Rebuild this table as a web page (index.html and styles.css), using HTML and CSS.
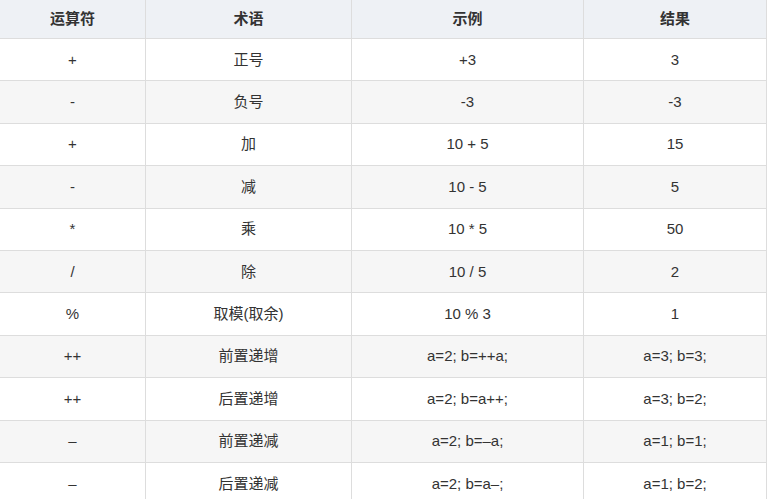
FILE: index.html
```html
<!DOCTYPE html>
<html lang="zh-CN">
<head>
<meta charset="utf-8">
<title>运算符</title>
<link rel="stylesheet" href="styles.css">
</head>
<body>
<table class="ops">
  <colgroup>
    <col class="c1"><col class="c2"><col class="c3"><col class="c4">
  </colgroup>
  <thead>
    <tr><th>运算符</th><th>术语</th><th>示例</th><th>结果</th></tr>
  </thead>
  <tbody>
    <tr><td>+</td><td>正号</td><td>+3</td><td>3</td></tr>
    <tr><td>-</td><td>负号</td><td>-3</td><td>-3</td></tr>
    <tr><td>+</td><td>加</td><td>10 + 5</td><td>15</td></tr>
    <tr><td>-</td><td>减</td><td>10 - 5</td><td>5</td></tr>
    <tr><td>*</td><td>乘</td><td>10 * 5</td><td>50</td></tr>
    <tr><td>/</td><td>除</td><td>10 / 5</td><td>2</td></tr>
    <tr><td>%</td><td>取模(取余)</td><td>10 % 3</td><td>1</td></tr>
    <tr><td>++</td><td>前置递增</td><td>a=2; b=++a;</td><td>a=3; b=3;</td></tr>
    <tr><td>++</td><td>后置递增</td><td>a=2; b=a++;</td><td>a=3; b=2;</td></tr>
    <tr><td>–</td><td>前置递减</td><td>a=2; b=–a;</td><td>a=1; b=1;</td></tr>
    <tr><td>–</td><td>后置递减</td><td>a=2; b=a–;</td><td>a=1; b=2;</td></tr>
  </tbody>
</table>
</body>
</html>
```
FILE: styles.css
```css
html, body {
  margin: 0;
  padding: 0;
  background: #fff;
}
body {
  font-family: "Liberation Sans", Arial, "Noto Sans CJK SC", sans-serif;
  font-size: 15px;
  color: #333;
}
.ops {
  width: 767px;
  table-layout: fixed;
  border-collapse: separate;
  border-spacing: 0;
}
.ops .c1 { width: 146px; }
.ops .c2 { width: 206px; }
.ops .c3 { width: 232px; }
.ops .c4 { width: 183px; }
.ops th,
.ops td {
  padding: 0;
  text-align: center;
  vertical-align: middle;
  border-right: 1px solid #dddddd;
  border-bottom: 1px solid #dddddd;
  line-height: 20px;
}
.ops thead tr {
  height: 39px;
}
.ops th {
  background: #eef1f5;
  font-weight: bold;
}
.ops tbody tr {
  height: 42.4px;
}
.ops tbody tr:nth-child(even) td {
  background: #f6f6f6;
}
```
